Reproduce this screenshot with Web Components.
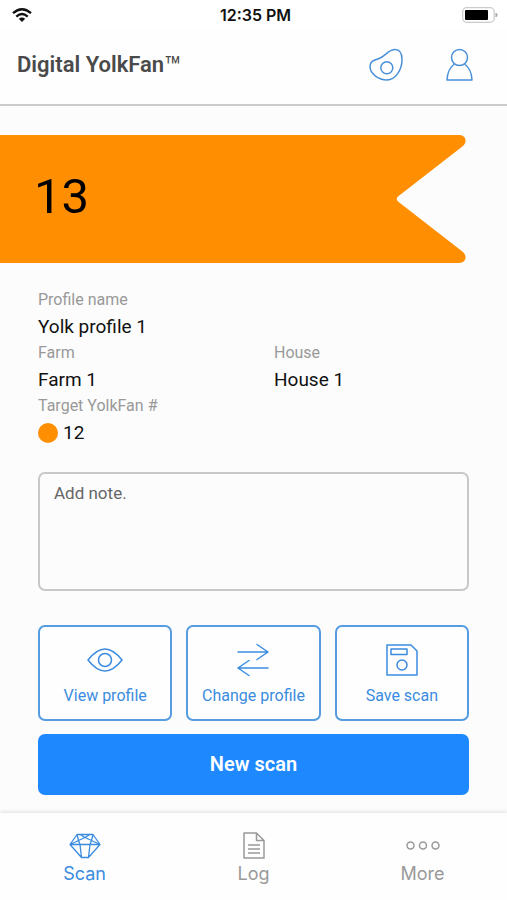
<!DOCTYPE html>
<html lang="en">
<head>
<meta charset="utf-8">
<meta name="viewport" content="width=device-width, initial-scale=1">
<title>Digital YolkFan</title>
<style>
  body { margin: 0; background: #fcfcfc; font-family: Roboto, "Liberation Sans", sans-serif; color: #111; }
</style>
</head>
<body>
<yolk-app></yolk-app>
<script>
const define = (name, html) => {
  const template = document.createElement('template');
  template.innerHTML = '<style>*{box-sizing:border-box}</style>' + html;
  customElements.define(name, class extends HTMLElement {
    constructor() {
      super();
      this.attachShadow({ mode: 'open' }).append(template.content.cloneNode(true));
    }
  });
};

define('status-bar', `
  <style>
    :host { display: grid; grid-template-columns: 1fr auto 1fr; align-items: center; height: 29px; padding: 0 8px 0 12px; background: #fff;
      font: 600 16px/20px Inter, "Liberation Sans", sans-serif; color: #111; }
    svg { display: block; }
    .battery { justify-self: end; }
  </style>
  <svg width="20" height="14" viewBox="0 0 20 14" fill="none" stroke="#111" stroke-width="2.4" aria-label="Wi-Fi">
    <path d="M1 5.2Q10-2.6 19 5.2M4.3 8.6Q10 3.6 15.700 8.600"/><path d="M6.800 10.800Q10 8.200 13.200 10.800L10 14Z" fill="#111" stroke="none"/>
  </svg>
  <span>12:35 PM</span>
  <svg class="battery" width="37" height="16" viewBox="0 0 37 16" aria-label="Battery">
    <rect x=".7" y=".7" width="31.500" height="14.600" rx="4" fill="#fff" stroke="#ccc" stroke-width="1.300"/>
    <rect x="3" y="3" width="23" height="10" rx="1" fill="#000"/><path d="M34 6q2.500 2 0 4z" fill="#aaa" stroke="#aaa"/>
  </svg>`);

define('app-header', `
  <style>
    :host { display: flex; align-items: center; justify-content: space-between; height: 77px; padding: 0 32px 4px 17px; background: #fefefe;
      border-bottom: 2px solid #ccc; }
    h1 { margin: 0; font-size: 22px; line-height: 28px; font-weight: 600; color: #4a4a4a; }
    h1 span { font-size: 28px; line-height: 0; font-weight: 400; vertical-align: -4px; }
    nav { display: flex; gap: 41px; }
    button { display: flex; padding: 0; border: 0; background: none; color: #4a90d9; }
    svg { display: block; fill: none; stroke: currentColor; stroke-width: 1.500; }
  </style>
  <h1>Digital YolkFan<span>™</span></h1>
  <nav>
    <button aria-label="Egg scans"><svg width="36" height="34" viewBox="0 0 36 34">
      <path d="M2 18.500C2 13 6 12.200 11 10.500C18 8 20 1.500 27 1.500C32.500 1.500 34 6 34 11.500C34 22 27.500 32 19 32C11 32 2 26 2 18.500Z"/><circle cx="18.800" cy="19.800" r="6"/></svg></button>
    <button aria-label="Account"><svg width="30" height="34" viewBox="0 0 30 34">
      <circle cx="14.500" cy="9.500" r="8"/><path d="M9.500 16C5 19 2.500 24 2 32H27C26.500 24 24 19 19.500 16" stroke-linejoin="round"/></svg></button>
  </nav>`);

define('score-banner', `
  <style>
    :host { display: flex; height: 128px; margin: 29px 41px 0 0; font-size: 49px; line-height: 60px; color: #000; }
    .body { flex: 1; display: flex; align-items: center; padding: 0 0 4px 34px; background: #ff8f00; }
    svg { display: block; fill: #ff8f00; }
  </style>
  <div class="body"><slot></slot></div>
  <svg width="76" height="128" viewBox="0 0 76 128"><path d="M-1 0H69C76 0 77.500 7 73 11L8 61.500Q5.500 64 8 66.500L73 117C77.500 121 76 128 69 128H-1Z"/></svg>`);

define('profile-field', `
  <style>
    :host { display: block; }
    dl, dd { margin: 0; }
    dt { font-size: 16px; line-height: 24px; color: #999; }
    dd { display: flex; align-items: center; gap: 5px; font-size: 19px; line-height: 29px; color: #111; }
  </style>
  <dl><dt><slot name="label"></slot></dt><dd><slot></slot></dd></dl>`);

define('color-dot', `
  <style>:host { display: block; width: 20px; height: 20px; border-radius: 50%; background: #ff8f00; }</style>`);

define('note-box', `
  <style>
    :host { display: block; }
    textarea { display: block; width: 100%; height: 119px; padding: 7px 14px; resize: none; border: 2px solid #c8c8c8; border-radius: 7px;
      background: #fcfcfc; font: 17px/24px Roboto, "Liberation Sans", sans-serif; color: #111; }
    textarea::placeholder { color: #666; opacity: 1; }
  </style>
  <textarea aria-label="Note" placeholder="Add note."></textarea>`);

define('action-button', `
  <style>
    :host { display: block; }
    button { display: flex; flex-direction: column; align-items: center; gap: 7px; width: 100%; height: 96px; padding: 16px 0 0;
      border: 2px solid #559ce0; border-radius: 7px; background: #fefefe; color: #3b8ce0;
      font: 16px/24px Roboto, "Liberation Sans", sans-serif; white-space: nowrap; }
  </style>
  <button><slot name="icon"></slot><span><slot></slot></span></button>`);

define('primary-button', `
  <style>
    :host { display: block; }
    button { display: block; width: 100%; height: 61px; padding: 0 0 2px; border: 0; border-radius: 7px; background: #1e88ff; color: #fff;
      font: 600 20px/24px Roboto, "Liberation Sans", sans-serif; }
  </style>
  <button><slot></slot></button>`);

define('tab-item', `
  <style>
    :host { display: block; flex: 1; color: #999; }
    :host([active]) { color: #3b8ce0; }
    a { display: flex; flex-direction: column; align-items: center; gap: 2px; padding: 18px 0 14px; color: inherit; text-decoration: none;
      font: 18px/24px Inter, "Liberation Sans", sans-serif; }
  </style>
  <a href="#"><slot name="icon"></slot><span><slot></slot></span></a>`);

define('tab-bar', `
  <style>
    :host { display: flex; background: #fefefe; box-shadow: 0 -1px 4px rgba(0,0,0,.12); }
    svg { display: block; fill: none; stroke: currentColor; stroke-width: 1.500; stroke-linejoin: round; }
  </style>
  <tab-item active><svg slot="icon" width="32" height="29" viewBox="0 0 32 29">
    <path d="M8 3.500H24L31 13.500L19.500 26.500H12.500L1 13.500ZM1 13.500H31M8 3.500L9.500 9.500L16 6.500L22.500 9.500L24 3.500M1 13.500L9.500 9.500L11 13.500L12.500 26.500M31 13.500L22.500 9.500L21 13.500L19.500 26.500M11 3.500L16 6.500L21 3.500" stroke-width="1.300"/></svg>Scan</tab-item>
  <tab-item><svg slot="icon" width="24" height="29" viewBox="0 0 24 29">
    <path d="M2 2H14.500L22 9.500V27H2ZM14.500 2V9.500H22M6 14H18M6 18H18M6 22H18"/></svg>Log</tab-item>
  <tab-item><svg slot="icon" width="34" height="29" viewBox="0 0 34 29">
    <circle cx="4.500" cy="14.500" r="3.500"/><circle cx="17" cy="14.500" r="3.500"/><circle cx="29.500" cy="14.500" r="3.500"/></svg>More</tab-item>`);

define('yolk-app', `
  <style>
    :host { display: flex; flex-direction: column; min-height: 100vh; }
    main { flex: 1; }
    section { padding: 25px 38px 18px; }
    .fields { display: grid; grid-template-columns: 236fr 195fr; margin-bottom: 25px; }
    .wide { grid-column: 1 / -1; }
    .actions { display: grid; grid-template-columns: repeat(3, 1fr); gap: 14px; margin: 34px 0 13px; }
    svg { display: block; fill: none; stroke: currentColor; stroke-width: 1.500; stroke-linejoin: round; stroke-linecap: round; }
  </style>
  <status-bar></status-bar>
  <app-header></app-header>
  <main>
    <score-banner>13</score-banner>
    <section>
      <div class="fields">
        <profile-field class="wide"><span slot="label">Profile name</span>Yolk profile 1</profile-field>
        <profile-field><span slot="label">Farm</span>Farm 1</profile-field>
        <profile-field><span slot="label">House</span>House 1</profile-field>
        <profile-field class="wide"><span slot="label">Target YolkFan #</span><color-dot></color-dot><span>12</span></profile-field>
      </div>
      <note-box></note-box>
      <div class="actions">
        <action-button><svg slot="icon" width="38" height="34" viewBox="0 0 38 34">
          <path d="M2 17C7.500 10 12.500 6 19 6S30.500 10 36 17C30.500 24 25.500 28 19 28S7.500 24 2 17Z"/><circle cx="19" cy="17" r="6.500"/></svg>View profile</action-button>
        <action-button><svg slot="icon" width="34" height="34" viewBox="0 0 34 34">
          <path d="M2 9H32M21 1.500L32 9L21 16.500M32 25H2M13 17.500L2 25L13 32.500"/></svg>Change profile</action-button>
        <action-button><svg slot="icon" width="34" height="34" viewBox="0 0 34 34">
          <path d="M2 2H26L32 8V32H2ZM6 6H22V11.500H6Z"/><circle cx="17" cy="22" r="5"/></svg>Save scan</action-button>
      </div>
      <primary-button>New scan</primary-button>
    </section>
  </main>
  <tab-bar></tab-bar>`);
</script>
</body>
</html>
